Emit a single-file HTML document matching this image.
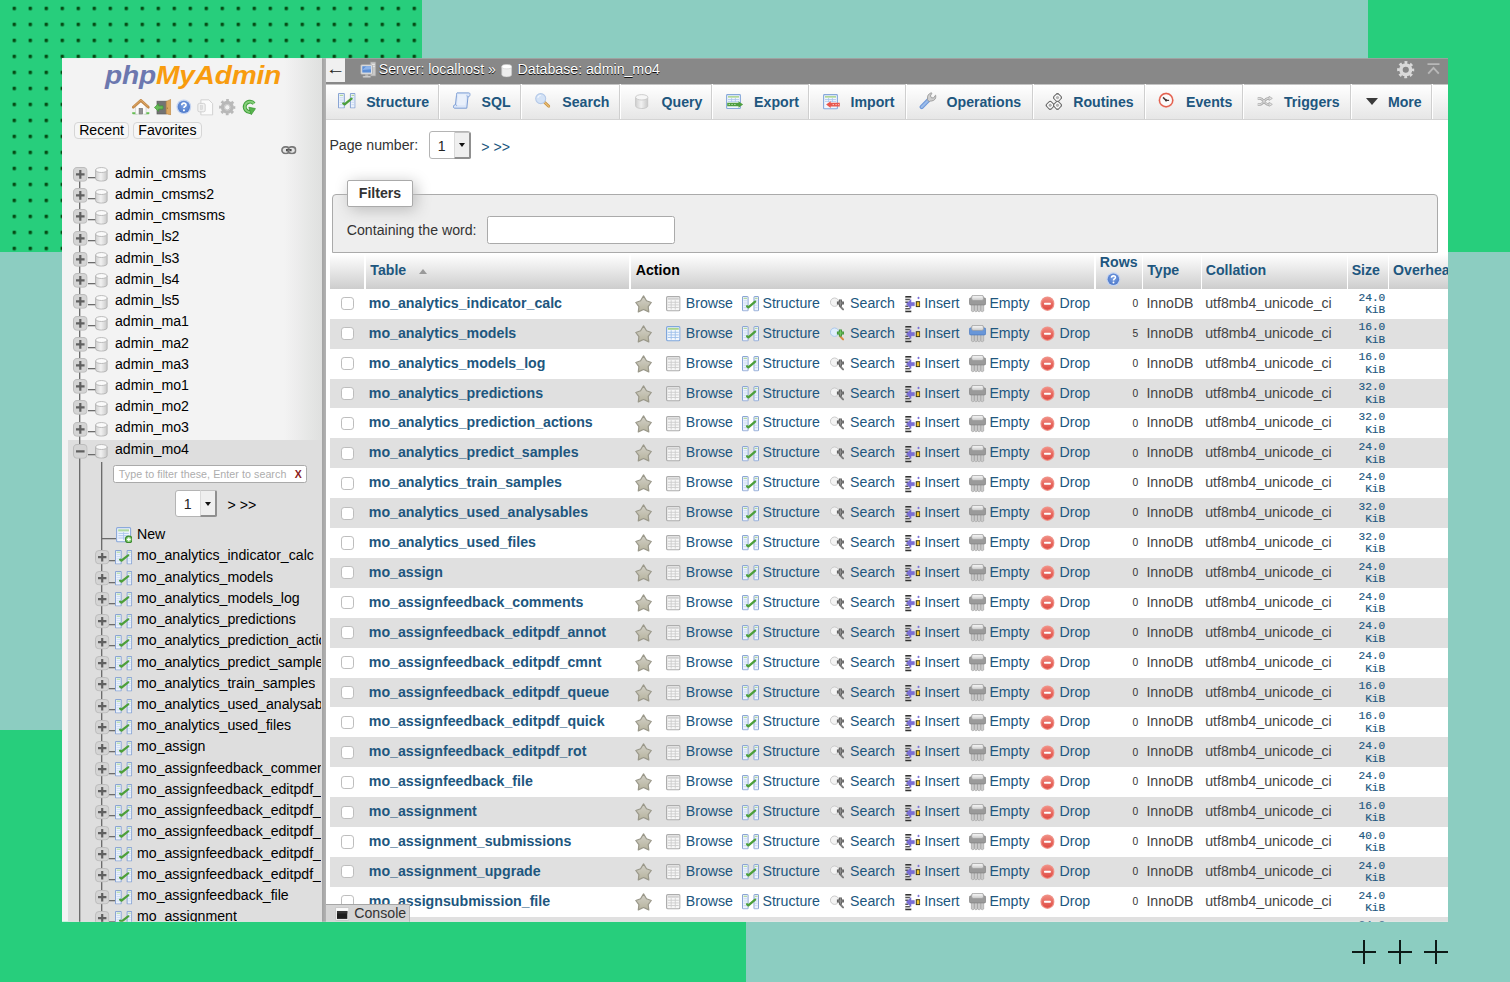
<!DOCTYPE html>
<html lang="en"><head><meta charset="utf-8"><title>phpMyAdmin</title>
<style>
html,body{margin:0;padding:0}
body{width:1510px;height:982px;background:#8ccdc1;position:relative;overflow:hidden;font-family:"Liberation Sans",Arial,sans-serif;font-size:14.15px;color:#444}
.grn{position:absolute;background:#27ce7c}
.plus{position:absolute;width:24px;height:24px}
.plus i{position:absolute;left:0;top:11px;width:24px;height:2px;background:#0d1a17}
.plus b{position:absolute;left:11px;top:0;width:2px;height:24px;background:#0d1a17}
#win{position:absolute;left:0;top:0;width:1510px;height:982px;clip-path:inset(58.25px 62px 60.25px 62px);background:#fff}
#win>*{position:absolute;white-space:nowrap}
.ic{position:absolute;overflow:visible}
#nav{left:62px;top:58px;width:260px;height:863px;background:linear-gradient(to right,#f3f3f3 0,#f3f3f3 222px,#ececec 236px,#e5e6e5 248px,#dfe0df 260px)}
#navhl{left:68px;top:440px;width:254px;height:482px;background:#dedede}
#resizer{left:322.1px;top:58px;width:3.8px;height:864px;background:linear-gradient(to right,#a2a2a2,#b2b2b2)}
#logo{left:105.2px;top:60.8px;font-size:25.6px;line-height:28px;font-weight:bold;font-style:italic;letter-spacing:-0.2px;transform-origin:0 0;transform:scaleX(1.10)}
#logo .php{color:#6c78af}#logo .mya{color:#f89c0e}
.nbtn{top:122.6px;height:15.4px;line-height:15.4px;border:1px solid #d6d6d6;border-radius:4px;background:#f6f6f6;color:#000;text-align:center;box-sizing:content-box;margin-left:0;width:0}
.nbtn{box-sizing:border-box;top:122.4px;height:16.8px;line-height:14.1px}
.vl{width:1px;background:#6c6c6c;box-shadow:1px 0 0 rgba(108,108,108,.35)}
.hl{height:1px;background:#6c6c6c;box-shadow:0 1px 0 rgba(108,108,108,.3)}
.pm{width:14.5px;height:14.5px;border-radius:4px;background:#d6d6d6;box-shadow:inset 0 0 0 1px #c2c2c2}
.pm i{position:absolute;left:3.1px;top:6.25px;width:8.5px;height:1.9px;background:#6a6a6a}
.pm b{position:absolute;left:6.25px;top:3.1px;width:1.9px;height:8.5px;background:#6a6a6a}
.nt{color:#000;line-height:20px;height:20px}
.nt.clip{max-width:184px;overflow:hidden}
.ninp{background:#fff;border:1px solid #aaa;border-radius:2.5px;box-sizing:border-box}
.ninp .ph{position:absolute;left:4.6px;top:0;line-height:16.6px;font-size:10.7px;color:#adadad;letter-spacing:0.05px}
.ninp .x{position:absolute;right:4.8px;top:0;line-height:17px;font-size:10.5px;font-weight:bold;color:#8b1a1a}
.sel{background:#fff;border:1px solid #b4b4b4;border-radius:3px;box-sizing:border-box}
.sel span{position:absolute;left:7.4px;top:1.5px;line-height:25px;font-size:14.1px;color:#222}
.sel em{position:absolute;right:-1px;top:-0.6px;bottom:-1px;width:16.6px;background:#efefef;border:solid;border-width:1.2px 2px 2px 0.6px;border-color:#c2c2c2 #909090 #8f8f8f #dadada;box-sizing:border-box;border-radius:0 2px 2px 0}
.sel em i{position:absolute;left:4px;top:10.6px;border:3.6px solid transparent;border-top:4.2px solid #111;border-bottom:0}
#crumb{left:326px;top:58px;width:1125px;height:25.6px;background:#888}
#back{left:326.4px;top:58px;width:18.8px;height:23.8px;background:#f0f0f0;color:#222;font-size:17px;line-height:21px;text-align:center;letter-spacing:0}
#back span{display:inline-block;transform:scale(1.15,0.95)}
.ct{top:58.7px;line-height:20px;color:#fff;text-shadow:0 1px 0 #111,0 0 1px #555}
#tabs{left:326px;top:83.6px;width:1125px;height:36.4px;border-top:1px solid #c4c4c4;background:linear-gradient(#fff,#e6e6e6);border-bottom:1px solid #d4d4d4;box-sizing:border-box}
.tab{top:84.4px;height:34.8px;border-right:1px solid #cfcfcf;box-shadow:1px 0 0 #fff}
.tt{top:91.8px;line-height:20px;font-weight:bold;color:#20567e}
.tri{width:0;height:0;border:6.15px solid transparent;border-top:7px solid #3a3a3a;border-bottom:0}
.mt{line-height:20px;color:#333}
.lk{color:#20567e}
#fs{left:331.9px;top:193.7px;width:1106px;height:59.2px;box-sizing:border-box;border:1px solid #aaa;border-radius:4px 4px 0 0;background:#eee}
#lg{left:347.3px;top:180.4px;width:65.4px;height:27px;box-sizing:border-box;border:1px solid #aaa;border-radius:2px;background:#fff;box-shadow:3px 3px 15px #bbb;font-weight:bold;color:#333;line-height:25px;text-align:center}
#finp{left:487.4px;top:216.1px;width:188.1px;height:27.6px;box-sizing:border-box;border:1px solid #aaa;border-radius:2.5px;background:#fff}
.th{top:254px;height:34.8px;background:linear-gradient(#fff,#cdcdcd)}
.tht{top:260.4px;line-height:20px;font-weight:bold}
.sortup{left:418.5px;top:269.4px;width:0;height:0;border:4px solid transparent;border-bottom:5px solid #999;border-top:0}
.rowbg{left:329.5px;width:1125px;height:29.9px;background:#e0e0e0}
.cb{left:340.8px;width:13.2px;height:13.2px;box-sizing:border-box;border:1px solid #bdbdbd;border-radius:3.2px;background:#fff}
.r{line-height:20px}
.b{font-weight:bold;font-size:14.2px}
.mono{font-family:"Liberation Mono",monospace;font-size:11.2px;line-height:12.6px;text-align:right}
#console{left:326px;top:904.3px;width:84.4px;height:18px;box-sizing:border-box;background:#d5d5d5;border-top:1px solid #a6a6a6;border-right:1px solid #b8b8b8}
#contxt{left:354.3px;top:902.6px;line-height:20px;color:#333}

.rn{font-size:11.2px;line-height:14px;color:#333;transform:scaleX(0.92);transform-origin:100% 50%}
.sz{-webkit-text-stroke:0.15px #235a81}

</style></head>
<body>
<svg width="0" height="0" style="position:absolute"><defs>
<linearGradient id="gdb" x1="0" x2="1"><stop offset="0" stop-color="#d0d0d0"/><stop offset="0.45" stop-color="#f1f1f1"/><stop offset="1" stop-color="#c8c8c8"/></linearGradient>
<linearGradient id="gstar" x1="0" x2="0" y1="0" y2="1"><stop offset="0" stop-color="#d3d1c9"/><stop offset="1" stop-color="#b6b39d"/></linearGradient>
<linearGradient id="gred" x1="0" x2="0" y1="0" y2="1"><stop offset="0" stop-color="#f08a80"/><stop offset="1" stop-color="#df4a42"/></linearGradient>
<radialGradient id="ghelp" cx="0.5" cy="0.4" r="0.6"><stop offset="0" stop-color="#7da2e4"/><stop offset="1" stop-color="#4c78c9"/></radialGradient>
<symbol id="i_db" viewBox="0 0 13 16" preserveAspectRatio="none"><path d="M0.600 3.300v9.400c0 1.500 2.600 2.700 5.900 2.700s5.900-1.200 5.900-2.700V3.300z" fill="url(#gdb)" stroke="#acacac" stroke-width="0.900"/><ellipse cx="6.500" cy="3.300" rx="5.900" ry="2.700" fill="#fafafa" stroke="#b2b2b2" stroke-width="0.900"/></symbol>
<symbol id="i_dbw" viewBox="0 0 13 16"><path d="M0.6 3.2v9.6c0 1.4 2.6 2.6 5.9 2.6s5.9-1.2 5.9-2.6V3.2z" fill="#ededed" stroke="#c8c8c8" stroke-width="0.8"/><ellipse cx="6.5" cy="3.2" rx="5.9" ry="2.6" fill="#fff" stroke="#d0d0d0" stroke-width="0.8"/></symbol>
<symbol id="i_dbq" viewBox="0 0 13.5 15.1" preserveAspectRatio="none"><path d="M0.600 3.300v8.500c0 1.500 2.700 2.700 6.150 2.700s6.150-1.200 6.150-2.700V3.300z" fill="url(#gdb)" stroke="#c6c6c6" stroke-width="0.9"/><ellipse cx="6.750" cy="3.300" rx="6.150" ry="2.700" fill="#f6f6f6" stroke="#c9c9c9" stroke-width="0.9"/></symbol>
<symbol id="i_struct" viewBox="0 0 17 15.4" preserveAspectRatio="none"><rect x="0.5" y="0.5" width="5.600" height="14.400" rx="0.500" fill="#edf3fc" stroke="#8aa5d4" stroke-width="1"/><rect x="12" y="0.5" width="4.500" height="14.400" rx="0.500" fill="#edf3fc" stroke="#8aa5d4" stroke-width="1"/><path d="M1.600 2.300h3.400M13 2.300h2.600" stroke="#9fd07f" stroke-width="0.9"/><path d="M1.600 4.700h3.400M1.600 7h3.400M1.600 9.300h3.400M1.600 11.600h3.400M13 4.700h2.600M13 7h2.600M13 9.300h2.600M13 11.600h2.600" stroke="#c3d6f1" stroke-width="0.8"/><path d="M5.100 10.300l1.300 1L13.100 5.600" fill="none" stroke="#4c9f3a" stroke-width="2.300" stroke-linejoin="round" stroke-linecap="round"/></symbol>
<symbol id="i_star" viewBox="0 0 17.1 18.2" preserveAspectRatio="none"><path d="M8.55 0.9L11.5 5.7L16.3 7.5L13.2 11.7L13.8 16.9L8.55 14.5L3.3 16.9L3.9 11.700L0.8 7.5L5.6 5.700Z" fill="url(#gstar)" stroke="#9a988a" stroke-width="1.200" stroke-linejoin="round"/></symbol>
<symbol id="i_browse" viewBox="0 0 14.6 15.4" preserveAspectRatio="none"><rect x="0.6" y="0.6" width="13.4" height="14.2" rx="1.2" fill="#f7f7f7" stroke="#adadad" stroke-width="1.200"/><rect x="1.800" y="1.900" width="11" height="1.900" fill="#d2d2d2"/><path d="M1.800 6.300h11M1.800 8.900h11M1.800 11.500h11M5.200 4.200v9.400M9.300 4.200v9.400" stroke="#cdcdcd" stroke-width="0.9"/></symbol>
<symbol id="i_browse_c" viewBox="0 0 14.6 15.4" preserveAspectRatio="none"><rect x="0.6" y="0.6" width="13.400" height="14.200" rx="1.200" fill="#f3f8fe" stroke="#7fa6dc" stroke-width="1.200"/><rect x="1.800" y="1.900" width="11" height="1.900" fill="#a9d48c"/><path d="M1.800 6.300h11M1.800 8.900h11M1.800 11.500h11M5.200 4.200v9.400M9.300 4.200v9.400" stroke="#9dbfea" stroke-width="0.9"/></symbol>
<symbol id="i_drop" viewBox="0 0 14.9 15.4" preserveAspectRatio="none"><ellipse cx="7.450" cy="7.700" rx="7" ry="7.200" fill="#ef9288"/><ellipse cx="7.450" cy="7.700" rx="5.900" ry="6.100" fill="url(#gred)"/><rect x="4" y="6.800" width="6.900" height="1.900" rx="0.700" fill="#fff"/></symbol>
<symbol id="i_help" viewBox="0 0 16 16"><circle cx="8" cy="8" r="7.600" fill="#c3d3f1"/><circle cx="8" cy="8" r="6.300" fill="url(#ghelp)"/><path d="M5.900 6.300c0-2.700 4.300-2.700 4.300-0.300c0 1.600-2.100 1.600-2.100 3.200" fill="none" stroke="#fff" stroke-width="1.700"/><circle cx="8.100" cy="11.600" r="1.050" fill="#fff"/></symbol>
<symbol id="i_home" viewBox="0 0 17.7 15.6" preserveAspectRatio="none"><path d="M0.400 13.200h5v2.200h-4c-1 0-1.300-0.600-1-2.200zM17.300 13.200h-5v2.200h4c1 0 1.300-0.600 1-2.200z" fill="#5cb34a"/><path d="M0.400 13.800h4.400M12.900 13.800h4.400" stroke="#8ad57a" stroke-width="0.800"/><path d="M3.600 7.400v7.800h10.500V7.400L8.850 2.800z" fill="#fcfcfc" stroke="#c4c4c4" stroke-width="0.600"/><rect x="7.100" y="9.400" width="3.500" height="5.800" fill="#909090" stroke="#6c6c6c" stroke-width="0.600"/><path d="M1.200 8.200L8.850 1.400l7.650 6.800" fill="none" stroke="#c48a4a" stroke-width="2.700" stroke-linejoin="miter" stroke-linecap="round"/><path d="M1.600 7.600L8.850 1.100l7.250 6.500" fill="none" stroke="#e3ad6b" stroke-width="0.900"/></symbol>
<symbol id="i_logout" viewBox="0 0 17.100 16.200" preserveAspectRatio="none"><rect x="3" y="2.200" width="9.600" height="12.800" fill="#737373" stroke="#5c5c5c" stroke-width="0.700"/><path d="M12.200 2.400L16.800 0.400v15.600l-4.600-1.300z" fill="#dba760" stroke="#b98444" stroke-width="0.600" stroke-linejoin="round"/><path d="M13.400 8.600v1.300" stroke="#9a6c33" stroke-width="0.800"/><path d="M0.400 8.500l4.200-3.800v2.200h4.400v3.200H4.600v2.200z" fill="#67bb58" stroke="#3f9836" stroke-width="0.700" stroke-linejoin="round"/></symbol>
<symbol id="i_docs" viewBox="0 0 16 16"><path d="M3.600 0.800h7.600l3.600 3.600v10.800H3.600z" fill="#fbfbfb" stroke="#cfcfcf" stroke-width="0.900"/><rect x="0.700" y="4.200" width="7" height="8" rx="1.500" fill="#f1f1f1" stroke="#cfcfcf" stroke-width="0.900"/><rect x="3" y="6.300" width="2.200" height="3.800" fill="#e0e0e0" stroke="#d2d2d2" stroke-width="0.500"/></symbol>
<symbol id="i_gear" viewBox="0 0 16 16"><circle cx="8" cy="8" r="4.600" fill="none" stroke="#b8b8b8" stroke-width="3.200"/><circle cx="8" cy="8" r="6.700" fill="none" stroke="#b8b8b8" stroke-width="2.400" stroke-dasharray="2.630 2.630" stroke-dashoffset="1.300"/><circle cx="8" cy="8" r="2.600" fill="#f3f3f3" stroke="#a6a6a6" stroke-width="0.600"/></symbol>
<symbol id="i_gearw" viewBox="0 0 16 16"><circle cx="8" cy="8" r="4.400" fill="none" stroke="#d9d9d9" stroke-width="3.200"/><circle cx="8" cy="8" r="6.600" fill="none" stroke="#d9d9d9" stroke-width="2.600" stroke-dasharray="2.590 2.590" stroke-dashoffset="1.300"/><circle cx="8" cy="8" r="2.300" fill="#888"/></symbol>
<symbol id="i_reload" viewBox="0 0 13.800 16" preserveAspectRatio="none"><path d="M12 4.600A5.200 5.200 0 1 0 8.600 13" fill="none" stroke="#3f9e3a" stroke-width="3.900"/><path d="M12 4.600A5.200 5.200 0 1 0 8.600 13" fill="none" stroke="#86cf7a" stroke-width="1.900"/><path d="M6.800 8.200l6.800 1.400l-4.400 6.200z" fill="#57b44c" stroke="#3a9634" stroke-width="0.700" stroke-linejoin="round"/></symbol>
<symbol id="i_link" viewBox="0 0 15.600 8.400" preserveAspectRatio="none"><rect x="0.900" y="0.900" width="7.600" height="6.600" rx="3.300" fill="#e4e4e4" stroke="#787878" stroke-width="1.600"/><rect x="7.100" y="0.900" width="7.600" height="6.600" rx="3.300" fill="#e4e4e4" stroke="#787878" stroke-width="1.600"/><path d="M5 4.200h5.600" stroke="#4a4a4a" stroke-width="2.200"/><path d="M6.600 4.200h2.400" stroke="#999" stroke-width="1"/></symbol>
<symbol id="i_new" viewBox="0 0 16 16"><rect x="0.600" y="0.600" width="14" height="14.200" rx="1" fill="#eff5fd" stroke="#8aa9da" stroke-width="1.100"/><rect x="2.200" y="2.300" width="10.800" height="2.100" fill="#aed9a0"/><path d="M2.400 6.400h10.400M2.400 8.700h10.400M2.400 11h10.400M7.600 5.200v7.600" stroke="#a9c4ec" stroke-width="0.900"/><circle cx="12.800" cy="12.400" r="3.300" fill="#86cf77" stroke="#3c8a2e" stroke-width="1.300"/><path d="M10.900 12.400h3.800M12.800 10.500v3.800" stroke="#fff" stroke-width="1.200"/></symbol>
<symbol id="i_server" viewBox="0 0 16 18"><rect x="10" y="1" width="5.600" height="14" fill="#c9c9c9" stroke="#9a9a9a" stroke-width="0.700"/><path d="M11 3.500h3.600M11 5.500h3.600" stroke="#eee" stroke-width="0.800"/><rect x="0.600" y="3.800" width="11.600" height="9.400" rx="0.800" fill="#e8e8e8" stroke="#aaa" stroke-width="0.800"/><rect x="2" y="5.200" width="8.800" height="6.400" fill="#5d8fd6"/><path d="M2 9l4-3.800h4.800v3z" fill="#8db4ea"/><rect x="5" y="13.200" width="3" height="2" fill="#bbb"/><rect x="2.600" y="15" width="7.800" height="1.600" rx="0.600" fill="#d4d4d4" stroke="#aaa" stroke-width="0.400"/></symbol>
<symbol id="i_coll" viewBox="0 0 13 12"><path d="M0.500 1.200h12" stroke="#b8b8b8" stroke-width="1.800"/><path d="M1.200 10.600L6.500 4.800l5.300 5.800" fill="none" stroke="#b8b8b8" stroke-width="1.900"/></symbol>
<symbol id="i_sql" viewBox="0 0 17.7 17.5" preserveAspectRatio="none"><path d="M4 0.900h11.800c1.200 0 1.600 1.100 1.200 2.400c-0.300 1-1 1.500-2 1.500l-1.200 11.400H1.800c-1.300 0-1.700-1-1.200-2.200c0.300-0.900 1-1.400 1.900-1.400L3.500 3.200c0.100-1-0.300-1.700 0.500-2.300z" fill="#dbe6f8" stroke="#7b9dd4" stroke-width="1" stroke-linejoin="round"/><path d="M15 4.800c-0.900 0-1.300-0.700-1.100-1.500M2.500 12.600c0.900 0 1.300 0.700 1.100 1.500" fill="none" stroke="#7b9dd4" stroke-width="0.800"/><path d="M5 2.300h8.300l-1 11H4z" fill="#e9f0fb"/></symbol>
<symbol id="i_search" viewBox="0 0 15.2 14.8" preserveAspectRatio="none"><path d="M9.600 9.400l4.300 4" stroke="#c99345" stroke-width="2.800" stroke-linecap="round"/><path d="M9.600 9.400l4.300 4" stroke="#e9c078" stroke-width="1.200" stroke-linecap="round"/><circle cx="5.700" cy="5.600" r="5" fill="#d3e2f6" stroke="#b4c9e8" stroke-width="1.100"/><path d="M2.800 4.800a3 3 0 0 1 3-2.300" fill="none" stroke="#f1f6fd" stroke-width="1.200"/></symbol>
<symbol id="i_search_g" viewBox="0 0 14 13.7" preserveAspectRatio="none"><path d="M10.400 9.600l2.600 2.800" stroke="#808080" stroke-width="2.100" stroke-linecap="round"/><circle cx="4.600" cy="5.200" r="4.200" fill="#f3f3f3" stroke="#c6c6c6" stroke-width="0.900"/><path d="M10.400 2.500v7M6.900 6h7" stroke="#595959" stroke-width="3"/><path d="M10.400 3.300v5.400M7.700 6h5.400" stroke="#909090" stroke-width="1.200"/></symbol>
<symbol id="i_search_c" viewBox="0 0 14 13.7" preserveAspectRatio="none"><path d="M10.400 9.600l2.600 2.800" stroke="#d98a45" stroke-width="2.100" stroke-linecap="round"/><circle cx="4.600" cy="5.200" r="4.200" fill="#dfeefc" stroke="#a6c4ea" stroke-width="0.900"/><path d="M10.400 2.500v7M6.900 6h7" stroke="#3d8f32" stroke-width="3"/><path d="M10.400 3.300v5.400M7.700 6h5.400" stroke="#74c765" stroke-width="1.200"/></symbol>
<symbol id="i_insert" viewBox="0 0 15.2 16.4" preserveAspectRatio="none"><path d="M0.300 0.900h6M0.300 15.500h6" stroke="#333" stroke-width="1.800"/><path d="M0.300 3.600h4.600M0.300 6.200h3M0.300 10.200h3M0.300 12.800h4.600" stroke="#555" stroke-width="1.500"/><path d="M0.300 2.200h5.500M0.300 14.200h5.500" stroke="#c9c9c9" stroke-width="1"/><path d="M1.300 8.100l4.700-4.600v3h3.400v3.200H6v3z" fill="#7a6fd6" stroke="#6a5fc8" stroke-width="0.500"/><rect x="11.300" y="5.700" width="3.500" height="4.900" fill="#f0c431" stroke="#3a3418" stroke-width="1"/><path d="M13.500 0.500l1.300 1.400l-1.300 1.400l-1.300-1.400z" fill="#7a6fd6"/></symbol>
<symbol id="i_empty" viewBox="0 0 17.1 17.4" preserveAspectRatio="none"><path d="M2.400 9.500v6.500l1.500 1l1.400-1.200l1.600 1.200l1.600-1.100l1.700 1.100l1.600-1.200l1.400 1.200l1.500-1V9.500z" fill="#c9c9c9" stroke="#a5a5a5" stroke-width="0.700"/><path d="M5.300 10v5.600M8.500 10v5.800M11.800 10v5.600" stroke="#a0a0a0" stroke-width="0.800"/><rect x="0.400" y="2.900" width="16.300" height="7" rx="1.500" fill="#9a9a9a" stroke="#858585" stroke-width="0.800"/><rect x="2.600" y="0.400" width="11.900" height="4.900" rx="1.600" fill="#dcdcdc" stroke="#9f9f9f" stroke-width="0.800"/><rect x="3.600" y="1.300" width="9.900" height="1.300" rx="0.600" fill="#f4f4f4"/></symbol>
<symbol id="i_empty_c" viewBox="0 0 17.1 17.4" preserveAspectRatio="none"><path d="M2.400 9.500v6.500l1.500 1l1.400-1.200l1.600 1.200l1.600-1.100l1.700 1.100l1.600-1.200l1.400 1.200l1.500-1V9.500z" fill="#c9c9c9" stroke="#a5a5a5" stroke-width="0.700"/><path d="M5.300 10v5.600M8.500 10v5.800M11.800 10v5.600" stroke="#a0a0a0" stroke-width="0.800"/><rect x="0.400" y="2.900" width="16.300" height="7" rx="1.500" fill="#6896d8" stroke="#4f7dc2" stroke-width="0.800"/><rect x="2.600" y="0.400" width="11.900" height="4.900" rx="1.600" fill="#dcdcdc" stroke="#9f9f9f" stroke-width="0.800"/><rect x="3.600" y="1.300" width="9.900" height="1.300" rx="0.600" fill="#f4f4f4"/></symbol>
<symbol id="i_export" viewBox="0 0 17.5 15.1" preserveAspectRatio="none"><rect x="0.600" y="0.600" width="13.800" height="13.900" rx="0.900" fill="#f1f6fd" stroke="#86a8da" stroke-width="1.100"/><rect x="2" y="2.100" width="11" height="1.500" fill="#a9d48c"/><path d="M2 5.500h11M2 7.400h11M5.600 4v4M9.400 4v4" stroke="#a9c5ec" stroke-width="0.800"/><path d="M1.200 8.700h11.300V7.200l4.600 3.300l-4.600 3.300v-1.500H1.200z" fill="#4f9f40"/><path d="M2.600 10.500h1.400M5.400 10.500h1.400M8.200 10.500h1.400" stroke="#b9dfb0" stroke-width="1"/></symbol>
<symbol id="i_import" viewBox="0 0 17.100 15.500" preserveAspectRatio="none"><rect x="0.600" y="0.600" width="13.800" height="14.300" rx="0.900" fill="#f1f6fd" stroke="#86a8da" stroke-width="1.100"/><rect x="2" y="2.100" width="11" height="1.500" fill="#a9d48c"/><path d="M2 5.500h11M2 7.400h11M5.600 4v4M9.400 4v4" stroke="#a9c5ec" stroke-width="0.800"/><path d="M16.800 8.800H7.700V7.300L3.100 10.600l4.600 3.300v-1.500h9.100z" fill="#e9574d"/><path d="M9.600 10.600h1.400M12.400 10.600h1.400M15 10.600h1" stroke="#fbc9c4" stroke-width="1"/></symbol>
<symbol id="i_wrench" viewBox="0 0 17.6 17.7" preserveAspectRatio="none"><path d="M2.700 15l6.600-6.700" stroke="#6f98d8" stroke-width="4.200" stroke-linecap="round"/><path d="M2.700 15l6.600-6.700" stroke="#9bbcea" stroke-width="2" stroke-linecap="round"/><path d="M8.600 6.500c-0.500-2.400 0.800-4.700 3.400-5.600c0.600-0.200 1 0.100 0.700 0.600l-1.300 2.400l1.100 1.900l2.200 0.100l1.500-2.300c0.300-0.500 0.800-0.400 0.800 0.200c0.200 2.700-1.700 4.900-4.300 5.200c-1 0.100-1.700 0-2.400 0.600l-2.300-2.200c0.500-0.400 0.700-0.600 0.600-0.900z" fill="#cfcfcf" stroke="#8f8f8f" stroke-width="0.800" stroke-linejoin="round"/></symbol>
<symbol id="i_routines" viewBox="0 0 17.9 17.1" preserveAspectRatio="none"><g transform="translate(12.5 4.600)"><rect x="-3.300" y="-3.300" width="6.600" height="6.600" rx="2" transform="rotate(45)" fill="#fafafa" stroke="#6d6d6d" stroke-width="1"/><path d="M0 -4.400v1M0 4.400v-1M-4.400 0h1M4.400 0h-1" stroke="#6d6d6d" stroke-width="1.800"/><circle r="1.200" fill="#b9b9b9" stroke="#8a8a8a" stroke-width="0.500"/></g><g transform="translate(5.200 12.300)"><rect x="-3.300" y="-3.300" width="6.600" height="6.600" rx="2" transform="rotate(45)" fill="#fafafa" stroke="#6d6d6d" stroke-width="1"/><path d="M0 -4.400v1M0 4.400v-1M-4.400 0h1M4.400 0h-1" stroke="#6d6d6d" stroke-width="1.800"/><circle r="1.200" fill="#b9b9b9" stroke="#8a8a8a" stroke-width="0.500"/></g><g transform="translate(12.500 12.300)"><rect x="-3.300" y="-3.300" width="6.600" height="6.600" rx="2" transform="rotate(45)" fill="#fafafa" stroke="#6d6d6d" stroke-width="1"/><path d="M0 -4.400v1M0 4.400v-1M-4.400 0h1M4.400 0h-1" stroke="#6d6d6d" stroke-width="1.800"/><circle r="1.200" fill="#b9b9b9" stroke="#8a8a8a" stroke-width="0.500"/></g></symbol>
<symbol id="i_clock" viewBox="0 0 16.2 16.3" preserveAspectRatio="none"><circle cx="8.100" cy="8.150" r="7.700" fill="#f6b9ae"/><circle cx="8.100" cy="8.150" r="6.600" fill="#fbfbfb" stroke="#e2604f" stroke-width="1.400"/><path d="M8.100 8.400L5 5.400" stroke="#4a3a3a" stroke-width="1.500"/><path d="M8.100 8.400h3" stroke="#4a3a3a" stroke-width="1.300"/><circle cx="8.100" cy="8.400" r="1.100" fill="#3c3030"/></symbol>
<symbol id="i_trig" viewBox="0 0 15.800 10.700" preserveAspectRatio="none"><path d="M0.700 2.400h2.500c3 0 4.600 6 7.600 6h2M0.700 8.400h2.500c3 0 4.600-6 7.600-6h2" fill="none" stroke="#a6a6a6" stroke-width="2.500"/><path d="M0.700 2.400h2.500c3 0 4.600 6 7.600 6h2M0.700 8.400h2.500c3 0 4.600-6 7.600-6h2" fill="none" stroke="#e9e9e9" stroke-width="0.900"/><path d="M12 0.300l3.400 2.100l-3.400 2.100zM12 6.300l3.400 2.100l-3.400 2.100z" fill="#e4e4e4" stroke="#a6a6a6" stroke-width="0.700" stroke-linejoin="round"/></symbol>
<symbol id="i_console" viewBox="0 0 14.300 13.900" preserveAspectRatio="none"><rect x="0.400" y="0.400" width="13.500" height="13.100" rx="1" fill="#ececec" stroke="#c2c2c2" stroke-width="0.800"/><rect x="1.200" y="1.200" width="11.900" height="2.600" fill="#fafafa"/><rect x="2" y="4" width="10.300" height="7.900" fill="#1d1d1d"/><path d="M2 4h10.300v2.400H2z" fill="#333"/></symbol>
<symbol id="i_plus" viewBox="0 0 14.500 14.500"><rect x="0.500" y="0.500" width="13.500" height="13.500" rx="3.600" fill="#d4d4d4" stroke="#bcbcbc" stroke-width="1"/><path d="M3 7.250h8.500M7.250 3v8.500" stroke="#606060" stroke-width="2.200"/></symbol>
<symbol id="i_minus" viewBox="0 0 14.500 14.500"><rect x="0.500" y="0.500" width="13.500" height="13.500" rx="3.600" fill="#d4d4d4" stroke="#bcbcbc" stroke-width="1"/><path d="M3 7.250h8.500" stroke="#606060" stroke-width="2.200"/></symbol>
</defs></svg>
<div class="grn" style="left:0;top:0;width:421.5px;height:251.5px"><svg width="422" height="252" style="position:absolute;left:0;top:0"><defs><pattern id="dots" x="12.6" y="6.7" width="16" height="16" patternUnits="userSpaceOnUse"><rect x="0" y="0" width="3.4" height="3.4" rx="0.9" fill="#054a14"/></pattern></defs><rect x="6" width="416" height="252" fill="url(#dots)"/></svg></div>
<div class="grn" style="left:1368px;top:0;width:142px;height:251.7px"></div>
<div class="grn" style="left:0;top:729.7px;width:745.7px;height:253px"></div>
<div class="plus" style="left:1351.9px;top:940.3px"><i></i><b></b></div><div class="plus" style="left:1388px;top:940.3px"><i></i><b></b></div><div class="plus" style="left:1423.8px;top:940.3px"><i></i><b></b></div>
<div id="win">
<div id="nav"></div><div id="navhl"></div><div id="resizer"></div>
<div id="logo"><span class="php">php</span><span class="mya">MyAdmin</span></div>
<svg class="ic" style="left:132px;top:99.3px;width:17.7px;height:15.6px" ><use href="#i_home"/></svg><svg class="ic" style="left:153.9px;top:99px;width:17.1px;height:16.2px" ><use href="#i_logout"/></svg><svg class="ic" style="left:176.2px;top:99.3px;width:15.7px;height:15.7px" ><use href="#i_help"/></svg><svg class="ic" style="left:197.2px;top:98.5px;width:17px;height:16.8px" ><use href="#i_docs"/></svg><svg class="ic" style="left:219.2px;top:99px;width:16.6px;height:16.6px" ><use href="#i_gear"/></svg><svg class="ic" style="left:242px;top:99.3px;width:13.8px;height:16px" ><use href="#i_reload"/></svg><div class="nbtn" style="left:74.3px;width:54.5px">Recent</div><div class="nbtn" style="left:133.3px;width:68.3px">Favorites</div>
<svg class="ic" style="left:281.1px;top:145.8px;width:15.6px;height:8.4px" ><use href="#i_link"/></svg><div class="vl" style="left:79px;top:180px;height:745px"></div><div class="vl" style="left:101.3px;top:461.7px;height:465px"></div><div class="hl" style="left:87.5px;top:176.70px;width:8.5px"></div><svg class="ic" style="left:73.1px;top:166.95px;width:14.6px;height:14.8px" ><use href="#i_plus"/></svg><svg class="ic" style="left:95.4px;top:167.3px;width:12.8px;height:14.7px" ><use href="#i_db"/></svg><div class="nt" style="left:115px;top:162.72px">admin_cmsms</div>
<div class="hl" style="left:87.5px;top:197.93px;width:8.5px"></div><svg class="ic" style="left:73.1px;top:188.18px;width:14.6px;height:14.8px" ><use href="#i_plus"/></svg><svg class="ic" style="left:95.4px;top:188.53px;width:12.8px;height:14.7px" ><use href="#i_db"/></svg><div class="nt" style="left:115px;top:183.95px">admin_cmsms2</div>
<div class="hl" style="left:87.5px;top:219.16px;width:8.5px"></div><svg class="ic" style="left:73.1px;top:209.41px;width:14.6px;height:14.8px" ><use href="#i_plus"/></svg><svg class="ic" style="left:95.4px;top:209.76px;width:12.8px;height:14.7px" ><use href="#i_db"/></svg><div class="nt" style="left:115px;top:205.18px">admin_cmsmsms</div>
<div class="hl" style="left:87.5px;top:240.39px;width:8.5px"></div><svg class="ic" style="left:73.1px;top:230.64px;width:14.6px;height:14.8px" ><use href="#i_plus"/></svg><svg class="ic" style="left:95.4px;top:230.99px;width:12.8px;height:14.7px" ><use href="#i_db"/></svg><div class="nt" style="left:115px;top:226.41px">admin_ls2</div>
<div class="hl" style="left:87.5px;top:261.62px;width:8.5px"></div><svg class="ic" style="left:73.1px;top:251.87px;width:14.6px;height:14.8px" ><use href="#i_plus"/></svg><svg class="ic" style="left:95.4px;top:252.22px;width:12.8px;height:14.7px" ><use href="#i_db"/></svg><div class="nt" style="left:115px;top:247.64px">admin_ls3</div>
<div class="hl" style="left:87.5px;top:282.85px;width:8.5px"></div><svg class="ic" style="left:73.1px;top:273.1px;width:14.6px;height:14.8px" ><use href="#i_plus"/></svg><svg class="ic" style="left:95.4px;top:273.45px;width:12.8px;height:14.7px" ><use href="#i_db"/></svg><div class="nt" style="left:115px;top:268.87px">admin_ls4</div>
<div class="hl" style="left:87.5px;top:304.08px;width:8.5px"></div><svg class="ic" style="left:73.1px;top:294.33px;width:14.6px;height:14.8px" ><use href="#i_plus"/></svg><svg class="ic" style="left:95.4px;top:294.68px;width:12.8px;height:14.7px" ><use href="#i_db"/></svg><div class="nt" style="left:115px;top:290.10px">admin_ls5</div>
<div class="hl" style="left:87.5px;top:325.31px;width:8.5px"></div><svg class="ic" style="left:73.1px;top:315.56px;width:14.6px;height:14.8px" ><use href="#i_plus"/></svg><svg class="ic" style="left:95.4px;top:315.91px;width:12.8px;height:14.7px" ><use href="#i_db"/></svg><div class="nt" style="left:115px;top:311.33px">admin_ma1</div>
<div class="hl" style="left:87.5px;top:346.54px;width:8.5px"></div><svg class="ic" style="left:73.1px;top:336.79px;width:14.6px;height:14.8px" ><use href="#i_plus"/></svg><svg class="ic" style="left:95.4px;top:337.14px;width:12.8px;height:14.7px" ><use href="#i_db"/></svg><div class="nt" style="left:115px;top:332.56px">admin_ma2</div>
<div class="hl" style="left:87.5px;top:367.77px;width:8.5px"></div><svg class="ic" style="left:73.1px;top:358.02px;width:14.6px;height:14.8px" ><use href="#i_plus"/></svg><svg class="ic" style="left:95.4px;top:358.37px;width:12.8px;height:14.7px" ><use href="#i_db"/></svg><div class="nt" style="left:115px;top:353.79px">admin_ma3</div>
<div class="hl" style="left:87.5px;top:389.00px;width:8.5px"></div><svg class="ic" style="left:73.1px;top:379.25px;width:14.6px;height:14.8px" ><use href="#i_plus"/></svg><svg class="ic" style="left:95.4px;top:379.6px;width:12.8px;height:14.7px" ><use href="#i_db"/></svg><div class="nt" style="left:115px;top:375.02px">admin_mo1</div>
<div class="hl" style="left:87.5px;top:410.23px;width:8.5px"></div><svg class="ic" style="left:73.1px;top:400.48px;width:14.6px;height:14.8px" ><use href="#i_plus"/></svg><svg class="ic" style="left:95.4px;top:400.83px;width:12.8px;height:14.7px" ><use href="#i_db"/></svg><div class="nt" style="left:115px;top:396.25px">admin_mo2</div>
<div class="hl" style="left:87.5px;top:431.46px;width:8.5px"></div><svg class="ic" style="left:73.1px;top:421.71px;width:14.6px;height:14.8px" ><use href="#i_plus"/></svg><svg class="ic" style="left:95.4px;top:422.06px;width:12.8px;height:14.7px" ><use href="#i_db"/></svg><div class="nt" style="left:115px;top:417.48px">admin_mo3</div>
<div class="hl" style="left:87.5px;top:453.59px;width:8.5px"></div><svg class="ic" style="left:73.1px;top:443.84px;width:14.6px;height:14.8px" ><use href="#i_minus"/></svg><svg class="ic" style="left:95.4px;top:444.19px;width:12.8px;height:14.7px" ><use href="#i_db"/></svg><div class="nt" style="left:115px;top:438.71px">admin_mo4</div>
<div class="ninp" style="left:113.2px;top:464.6px;width:194.3px;height:18.6px"><span class="ph">Type to filter these, Enter to search</span><span class="x">X</span></div>
<div class="sel" style="left:175.4px;top:489.8px;width:41.4px;height:27.4px"><span>1</span><em><i></i></em></div><div class="nt" style="left:227.5px;top:494.6px">&gt; &gt;&gt;</div>
<div class="hl" style="left:101.5px;top:538.2px;width:14.5px"></div><svg class="ic" style="left:116px;top:527.2px;width:16px;height:16px" ><use href="#i_new"/></svg><div class="nt" style="left:137px;top:523.9px">New</div>
<div class="hl" style="left:109px;top:560.40px;width:6.5px"></div><svg class="ic" style="left:95.1px;top:550.0px;width:14.4px;height:14.4px" ><use href="#i_plus"/></svg><svg class="ic" style="left:114.8px;top:550.0px;width:17.2px;height:14.5px" ><use href="#i_struct"/></svg><div class="nt clip" style="left:137px;top:545.42px">mo_analytics_indicator_calc</div>
<div class="hl" style="left:109px;top:581.63px;width:6.5px"></div><svg class="ic" style="left:95.1px;top:571.23px;width:14.4px;height:14.4px" ><use href="#i_plus"/></svg><svg class="ic" style="left:114.8px;top:571.23px;width:17.2px;height:14.5px" ><use href="#i_struct"/></svg><div class="nt clip" style="left:137px;top:566.65px">mo_analytics_models</div>
<div class="hl" style="left:109px;top:602.86px;width:6.5px"></div><svg class="ic" style="left:95.1px;top:592.46px;width:14.4px;height:14.4px" ><use href="#i_plus"/></svg><svg class="ic" style="left:114.8px;top:592.46px;width:17.2px;height:14.5px" ><use href="#i_struct"/></svg><div class="nt clip" style="left:137px;top:587.88px">mo_analytics_models_log</div>
<div class="hl" style="left:109px;top:624.09px;width:6.5px"></div><svg class="ic" style="left:95.1px;top:613.69px;width:14.4px;height:14.4px" ><use href="#i_plus"/></svg><svg class="ic" style="left:114.8px;top:613.69px;width:17.2px;height:14.5px" ><use href="#i_struct"/></svg><div class="nt clip" style="left:137px;top:609.11px">mo_analytics_predictions</div>
<div class="hl" style="left:109px;top:645.32px;width:6.5px"></div><svg class="ic" style="left:95.1px;top:634.92px;width:14.4px;height:14.4px" ><use href="#i_plus"/></svg><svg class="ic" style="left:114.8px;top:634.92px;width:17.2px;height:14.5px" ><use href="#i_struct"/></svg><div class="nt clip" style="left:137px;top:630.34px">mo_analytics_prediction_actions</div>
<div class="hl" style="left:109px;top:666.55px;width:6.5px"></div><svg class="ic" style="left:95.1px;top:656.15px;width:14.4px;height:14.4px" ><use href="#i_plus"/></svg><svg class="ic" style="left:114.8px;top:656.15px;width:17.2px;height:14.5px" ><use href="#i_struct"/></svg><div class="nt clip" style="left:137px;top:651.57px">mo_analytics_predict_samples</div>
<div class="hl" style="left:109px;top:687.78px;width:6.5px"></div><svg class="ic" style="left:95.1px;top:677.38px;width:14.4px;height:14.4px" ><use href="#i_plus"/></svg><svg class="ic" style="left:114.8px;top:677.38px;width:17.2px;height:14.5px" ><use href="#i_struct"/></svg><div class="nt clip" style="left:137px;top:672.80px">mo_analytics_train_samples</div>
<div class="hl" style="left:109px;top:709.01px;width:6.5px"></div><svg class="ic" style="left:95.1px;top:698.61px;width:14.4px;height:14.4px" ><use href="#i_plus"/></svg><svg class="ic" style="left:114.8px;top:698.61px;width:17.2px;height:14.5px" ><use href="#i_struct"/></svg><div class="nt clip" style="left:137px;top:694.03px">mo_analytics_used_analysables</div>
<div class="hl" style="left:109px;top:730.24px;width:6.5px"></div><svg class="ic" style="left:95.1px;top:719.84px;width:14.4px;height:14.4px" ><use href="#i_plus"/></svg><svg class="ic" style="left:114.8px;top:719.84px;width:17.2px;height:14.5px" ><use href="#i_struct"/></svg><div class="nt clip" style="left:137px;top:715.26px">mo_analytics_used_files</div>
<div class="hl" style="left:109px;top:751.47px;width:6.5px"></div><svg class="ic" style="left:95.1px;top:741.07px;width:14.4px;height:14.4px" ><use href="#i_plus"/></svg><svg class="ic" style="left:114.8px;top:741.07px;width:17.2px;height:14.5px" ><use href="#i_struct"/></svg><div class="nt clip" style="left:137px;top:736.49px">mo_assign</div>
<div class="hl" style="left:109px;top:772.70px;width:6.5px"></div><svg class="ic" style="left:95.1px;top:762.3px;width:14.4px;height:14.4px" ><use href="#i_plus"/></svg><svg class="ic" style="left:114.8px;top:762.3px;width:17.2px;height:14.5px" ><use href="#i_struct"/></svg><div class="nt clip" style="left:137px;top:757.72px">mo_assignfeedback_comments</div>
<div class="hl" style="left:109px;top:793.93px;width:6.5px"></div><svg class="ic" style="left:95.1px;top:783.53px;width:14.4px;height:14.4px" ><use href="#i_plus"/></svg><svg class="ic" style="left:114.8px;top:783.53px;width:17.2px;height:14.5px" ><use href="#i_struct"/></svg><div class="nt clip" style="left:137px;top:778.95px">mo_assignfeedback_editpdf_annot</div>
<div class="hl" style="left:109px;top:815.16px;width:6.5px"></div><svg class="ic" style="left:95.1px;top:804.76px;width:14.4px;height:14.4px" ><use href="#i_plus"/></svg><svg class="ic" style="left:114.8px;top:804.76px;width:17.2px;height:14.5px" ><use href="#i_struct"/></svg><div class="nt clip" style="left:137px;top:800.18px">mo_assignfeedback_editpdf_cmnt</div>
<div class="hl" style="left:109px;top:836.39px;width:6.5px"></div><svg class="ic" style="left:95.1px;top:825.99px;width:14.4px;height:14.4px" ><use href="#i_plus"/></svg><svg class="ic" style="left:114.8px;top:825.99px;width:17.2px;height:14.5px" ><use href="#i_struct"/></svg><div class="nt clip" style="left:137px;top:821.41px">mo_assignfeedback_editpdf_queue</div>
<div class="hl" style="left:109px;top:857.62px;width:6.5px"></div><svg class="ic" style="left:95.1px;top:847.22px;width:14.4px;height:14.4px" ><use href="#i_plus"/></svg><svg class="ic" style="left:114.8px;top:847.22px;width:17.2px;height:14.5px" ><use href="#i_struct"/></svg><div class="nt clip" style="left:137px;top:842.64px">mo_assignfeedback_editpdf_quick</div>
<div class="hl" style="left:109px;top:878.85px;width:6.5px"></div><svg class="ic" style="left:95.1px;top:868.45px;width:14.4px;height:14.4px" ><use href="#i_plus"/></svg><svg class="ic" style="left:114.8px;top:868.45px;width:17.2px;height:14.5px" ><use href="#i_struct"/></svg><div class="nt clip" style="left:137px;top:863.87px">mo_assignfeedback_editpdf_rot</div>
<div class="hl" style="left:109px;top:900.08px;width:6.5px"></div><svg class="ic" style="left:95.1px;top:889.68px;width:14.4px;height:14.4px" ><use href="#i_plus"/></svg><svg class="ic" style="left:114.8px;top:889.68px;width:17.2px;height:14.5px" ><use href="#i_struct"/></svg><div class="nt clip" style="left:137px;top:885.10px">mo_assignfeedback_file</div>
<div class="hl" style="left:109px;top:921.31px;width:6.5px"></div><svg class="ic" style="left:95.1px;top:910.91px;width:14.4px;height:14.4px" ><use href="#i_plus"/></svg><svg class="ic" style="left:114.8px;top:910.91px;width:17.2px;height:14.5px" ><use href="#i_struct"/></svg><div class="nt clip" style="left:137px;top:906.33px">mo_assignment</div>
<div id="crumb"></div><div id="back"><span>&larr;</span></div>
<svg class="ic" style="left:359.5px;top:60.5px;width:16.5px;height:18px" ><use href="#i_server"/></svg><div class="ct" style="left:378.8px">Server: localhost »</div><svg class="ic" style="left:501.4px;top:63.9px;width:11.4px;height:13.4px" ><use href="#i_dbw"/></svg><div class="ct" style="left:517.6px">Database: admin_mo4</div>
<svg class="ic" style="left:1396.5px;top:61px;width:17.5px;height:17.5px" ><use href="#i_gearw"/></svg><svg class="ic" style="left:1427.3px;top:63px;width:13px;height:12px" ><use href="#i_coll"/></svg><div id="tabs"></div>
<div class="tab" style="left:326px;width:112.2px"></div><svg class="ic" style="left:337.7px;top:93.4px;width:17.6px;height:15.5px" ><use href="#i_struct"/></svg><div class="tt" style="left:366.2px">Structure</div>
<div class="tab" style="left:438.4px;width:81.4px"></div><svg class="ic" style="left:453.3px;top:92.3px;width:17.7px;height:17.5px" ><use href="#i_sql"/></svg><div class="tt" style="left:481.5px">SQL</div>
<div class="tab" style="left:520px;width:98.6px"></div><svg class="ic" style="left:535px;top:93.2px;width:15.2px;height:14.8px" ><use href="#i_search"/></svg><div class="tt" style="left:562.3px">Search</div>
<div class="tab" style="left:618.8px;width:92.7px"></div><svg class="ic" style="left:635.1px;top:93.5px;width:13.5px;height:15.1px" ><use href="#i_dbq"/></svg><div class="tt" style="left:661.5px">Query</div>
<div class="tab" style="left:711.7px;width:96.7px"></div><svg class="ic" style="left:726.1px;top:93.5px;width:17.5px;height:15.1px" ><use href="#i_export"/></svg><div class="tt" style="left:754.1px">Export</div>
<div class="tab" style="left:808.6px;width:96.0px"></div><svg class="ic" style="left:822.7px;top:93.5px;width:17.1px;height:15.5px" ><use href="#i_import"/></svg><div class="tt" style="left:850.6px">Import</div>
<div class="tab" style="left:904.8px;width:126.9px"></div><svg class="ic" style="left:918.6px;top:92.3px;width:17.6px;height:17.7px" ><use href="#i_wrench"/></svg><div class="tt" style="left:946.5px">Operations</div>
<div class="tab" style="left:1031.9px;width:111.7px"></div><svg class="ic" style="left:1045.1px;top:92.7px;width:17.9px;height:17.1px" ><use href="#i_routines"/></svg><div class="tt" style="left:1073.2px">Routines</div>
<div class="tab" style="left:1143.8px;width:98.0px"></div><svg class="ic" style="left:1157.9px;top:92.3px;width:16.2px;height:16.3px" ><use href="#i_clock"/></svg><div class="tt" style="left:1186.0px">Events</div>
<div class="tab" style="left:1242px;width:107.6px"></div><svg class="ic" style="left:1256.6px;top:95.6px;width:15.8px;height:10.7px" ><use href="#i_trig"/></svg><div class="tt" style="left:1283.9px">Triggers</div>
<div class="tab" style="left:1349.8px;width:81.4px"></div><div class="tri" style="left:1365.7px;top:98px"></div><div class="tt" style="left:1387.9px">More</div>
<div class="mt" style="left:329.4px;top:135.4px">Page number:</div><div class="sel" style="left:429.3px;top:131.2px;width:41.4px;height:27.6px"><span>1</span><em><i></i></em></div><div class="mt lk" style="left:481.3px;top:137.1px">&gt; &gt;&gt;</div>
<div id="fs"></div><div id="lg">Filters</div><div class="mt" style="left:346.8px;top:220.4px">Containing the word:</div><div id="finp"></div>
<div class="th" style="left:329.8px;width:34.7px"></div><div class="th" style="left:366px;width:263.4px"></div><div class="th" style="left:631px;width:463.3px"></div><div class="th" style="left:1095.9px;width:45.8px"></div><div class="th" style="left:1143px;width:57.8px"></div><div class="th" style="left:1202.2px;width:144.5px"></div><div class="th" style="left:1348px;width:39.5px"></div><div class="th" style="left:1389px;width:71.0px"></div><div class="tht lk" style="left:370.3px">Table</div><div class="sortup"></div><div class="tht" style="left:635.8px;color:#000">Action</div><div class="tht lk" style="left:1099.8px;top:251.9px">Rows</div><svg class="ic" style="left:1105.5px;top:272.3px;width:14.8px;height:14.6px" ><use href="#i_help"/></svg><div class="tht lk" style="left:1147.2px">Type</div><div class="tht lk" style="left:1205.7px">Collation</div><div class="tht lk" style="left:1351.7px">Size</div><div class="tht lk" style="left:1393.1px">Overhead</div>
<div class="cb" style="top:297.20px"></div><div class="r b lk" style="left:368.8px;top:292.80px">mo_analytics_indicator_calc</div><svg class="ic" style="left:635px;top:294.9px;width:17.1px;height:18.2px" ><use href="#i_star"/></svg><svg class="ic" style="left:666.1px;top:296.2px;width:14.6px;height:15.4px" ><use href="#i_browse"/></svg><div class="r lk" style="left:685.8px;top:292.80px">Browse</div><svg class="ic" style="left:742.2px;top:296.2px;width:17px;height:15.4px" ><use href="#i_struct"/></svg><div class="r lk" style="left:762.5px;top:292.80px">Structure</div><svg class="ic" style="left:830.2px;top:296.8px;width:14px;height:13.7px" ><use href="#i_search_g"/></svg><div class="r lk" style="left:850.1px;top:292.80px">Search</div><svg class="ic" style="left:904.7px;top:296.2px;width:15.2px;height:16.4px" ><use href="#i_insert"/></svg><div class="r lk" style="left:924.2px;top:292.80px">Insert</div><svg class="ic" style="left:969.1px;top:295.2px;width:17.1px;height:17.4px" ><use href="#i_empty"/></svg><div class="r lk" style="left:989.4px;top:292.80px">Empty</div><svg class="ic" style="left:1040.2px;top:296.2px;width:14.9px;height:15.4px" ><use href="#i_drop"/></svg><div class="r lk" style="left:1059.5px;top:292.80px">Drop</div><div class="r rn" style="right:371.4px;top:296.00px">0</div><div class="r" style="left:1146.4px;top:292.80px">InnoDB</div><div class="r" style="left:1205.2px;top:292.80px">utf8mb4_unicode_ci</div><div class="r mono lk sz" style="right:124.7px;top:291.50px">24.0<br>KiB</div>
<div class="rowbg" style="top:318.70px"></div><div class="cb" style="top:327.10px"></div><div class="r b lk" style="left:368.8px;top:322.70px">mo_analytics_models</div><svg class="ic" style="left:635px;top:324.8px;width:17.1px;height:18.2px" ><use href="#i_star"/></svg><svg class="ic" style="left:666.1px;top:326.1px;width:14.6px;height:15.4px" ><use href="#i_browse_c"/></svg><div class="r lk" style="left:685.8px;top:322.70px">Browse</div><svg class="ic" style="left:742.2px;top:326.1px;width:17px;height:15.4px" ><use href="#i_struct"/></svg><div class="r lk" style="left:762.5px;top:322.70px">Structure</div><svg class="ic" style="left:830.2px;top:326.7px;width:14px;height:13.7px" ><use href="#i_search_c"/></svg><div class="r lk" style="left:850.1px;top:322.70px">Search</div><svg class="ic" style="left:904.7px;top:326.1px;width:15.2px;height:16.4px" ><use href="#i_insert"/></svg><div class="r lk" style="left:924.2px;top:322.70px">Insert</div><svg class="ic" style="left:969.1px;top:325.1px;width:17.1px;height:17.4px" ><use href="#i_empty_c"/></svg><div class="r lk" style="left:989.4px;top:322.70px">Empty</div><svg class="ic" style="left:1040.2px;top:326.1px;width:14.9px;height:15.4px" ><use href="#i_drop"/></svg><div class="r lk" style="left:1059.5px;top:322.70px">Drop</div><div class="r rn" style="right:371.4px;top:325.90px">5</div><div class="r" style="left:1146.4px;top:322.70px">InnoDB</div><div class="r" style="left:1205.2px;top:322.70px">utf8mb4_unicode_ci</div><div class="r mono lk sz" style="right:124.7px;top:321.40px">16.0<br>KiB</div>
<div class="cb" style="top:357.00px"></div><div class="r b lk" style="left:368.8px;top:352.60px">mo_analytics_models_log</div><svg class="ic" style="left:635px;top:354.7px;width:17.1px;height:18.2px" ><use href="#i_star"/></svg><svg class="ic" style="left:666.1px;top:356.0px;width:14.6px;height:15.4px" ><use href="#i_browse"/></svg><div class="r lk" style="left:685.8px;top:352.60px">Browse</div><svg class="ic" style="left:742.2px;top:356.0px;width:17px;height:15.4px" ><use href="#i_struct"/></svg><div class="r lk" style="left:762.5px;top:352.60px">Structure</div><svg class="ic" style="left:830.2px;top:356.6px;width:14px;height:13.7px" ><use href="#i_search_g"/></svg><div class="r lk" style="left:850.1px;top:352.60px">Search</div><svg class="ic" style="left:904.7px;top:356.0px;width:15.2px;height:16.4px" ><use href="#i_insert"/></svg><div class="r lk" style="left:924.2px;top:352.60px">Insert</div><svg class="ic" style="left:969.1px;top:355.0px;width:17.1px;height:17.4px" ><use href="#i_empty"/></svg><div class="r lk" style="left:989.4px;top:352.60px">Empty</div><svg class="ic" style="left:1040.2px;top:356.0px;width:14.9px;height:15.4px" ><use href="#i_drop"/></svg><div class="r lk" style="left:1059.5px;top:352.60px">Drop</div><div class="r rn" style="right:371.4px;top:355.80px">0</div><div class="r" style="left:1146.4px;top:352.60px">InnoDB</div><div class="r" style="left:1205.2px;top:352.60px">utf8mb4_unicode_ci</div><div class="r mono lk sz" style="right:124.7px;top:351.30px">16.0<br>KiB</div>
<div class="rowbg" style="top:378.50px"></div><div class="cb" style="top:386.90px"></div><div class="r b lk" style="left:368.8px;top:382.50px">mo_analytics_predictions</div><svg class="ic" style="left:635px;top:384.6px;width:17.1px;height:18.2px" ><use href="#i_star"/></svg><svg class="ic" style="left:666.1px;top:385.9px;width:14.6px;height:15.4px" ><use href="#i_browse"/></svg><div class="r lk" style="left:685.8px;top:382.50px">Browse</div><svg class="ic" style="left:742.2px;top:385.9px;width:17px;height:15.4px" ><use href="#i_struct"/></svg><div class="r lk" style="left:762.5px;top:382.50px">Structure</div><svg class="ic" style="left:830.2px;top:386.5px;width:14px;height:13.7px" ><use href="#i_search_g"/></svg><div class="r lk" style="left:850.1px;top:382.50px">Search</div><svg class="ic" style="left:904.7px;top:385.9px;width:15.2px;height:16.4px" ><use href="#i_insert"/></svg><div class="r lk" style="left:924.2px;top:382.50px">Insert</div><svg class="ic" style="left:969.1px;top:384.9px;width:17.1px;height:17.4px" ><use href="#i_empty"/></svg><div class="r lk" style="left:989.4px;top:382.50px">Empty</div><svg class="ic" style="left:1040.2px;top:385.9px;width:14.9px;height:15.4px" ><use href="#i_drop"/></svg><div class="r lk" style="left:1059.5px;top:382.50px">Drop</div><div class="r rn" style="right:371.4px;top:385.70px">0</div><div class="r" style="left:1146.4px;top:382.50px">InnoDB</div><div class="r" style="left:1205.2px;top:382.50px">utf8mb4_unicode_ci</div><div class="r mono lk sz" style="right:124.7px;top:381.20px">32.0<br>KiB</div>
<div class="cb" style="top:416.80px"></div><div class="r b lk" style="left:368.8px;top:412.40px">mo_analytics_prediction_actions</div><svg class="ic" style="left:635px;top:414.5px;width:17.1px;height:18.2px" ><use href="#i_star"/></svg><svg class="ic" style="left:666.1px;top:415.8px;width:14.6px;height:15.4px" ><use href="#i_browse"/></svg><div class="r lk" style="left:685.8px;top:412.40px">Browse</div><svg class="ic" style="left:742.2px;top:415.8px;width:17px;height:15.4px" ><use href="#i_struct"/></svg><div class="r lk" style="left:762.5px;top:412.40px">Structure</div><svg class="ic" style="left:830.2px;top:416.4px;width:14px;height:13.7px" ><use href="#i_search_g"/></svg><div class="r lk" style="left:850.1px;top:412.40px">Search</div><svg class="ic" style="left:904.7px;top:415.8px;width:15.2px;height:16.4px" ><use href="#i_insert"/></svg><div class="r lk" style="left:924.2px;top:412.40px">Insert</div><svg class="ic" style="left:969.1px;top:414.8px;width:17.1px;height:17.4px" ><use href="#i_empty"/></svg><div class="r lk" style="left:989.4px;top:412.40px">Empty</div><svg class="ic" style="left:1040.2px;top:415.8px;width:14.9px;height:15.4px" ><use href="#i_drop"/></svg><div class="r lk" style="left:1059.5px;top:412.40px">Drop</div><div class="r rn" style="right:371.4px;top:415.60px">0</div><div class="r" style="left:1146.4px;top:412.40px">InnoDB</div><div class="r" style="left:1205.2px;top:412.40px">utf8mb4_unicode_ci</div><div class="r mono lk sz" style="right:124.7px;top:411.10px">32.0<br>KiB</div>
<div class="rowbg" style="top:438.30px"></div><div class="cb" style="top:446.70px"></div><div class="r b lk" style="left:368.8px;top:442.30px">mo_analytics_predict_samples</div><svg class="ic" style="left:635px;top:444.4px;width:17.1px;height:18.2px" ><use href="#i_star"/></svg><svg class="ic" style="left:666.1px;top:445.7px;width:14.6px;height:15.4px" ><use href="#i_browse"/></svg><div class="r lk" style="left:685.8px;top:442.30px">Browse</div><svg class="ic" style="left:742.2px;top:445.7px;width:17px;height:15.4px" ><use href="#i_struct"/></svg><div class="r lk" style="left:762.5px;top:442.30px">Structure</div><svg class="ic" style="left:830.2px;top:446.3px;width:14px;height:13.7px" ><use href="#i_search_g"/></svg><div class="r lk" style="left:850.1px;top:442.30px">Search</div><svg class="ic" style="left:904.7px;top:445.7px;width:15.2px;height:16.4px" ><use href="#i_insert"/></svg><div class="r lk" style="left:924.2px;top:442.30px">Insert</div><svg class="ic" style="left:969.1px;top:444.7px;width:17.1px;height:17.4px" ><use href="#i_empty"/></svg><div class="r lk" style="left:989.4px;top:442.30px">Empty</div><svg class="ic" style="left:1040.2px;top:445.7px;width:14.9px;height:15.4px" ><use href="#i_drop"/></svg><div class="r lk" style="left:1059.5px;top:442.30px">Drop</div><div class="r rn" style="right:371.4px;top:445.50px">0</div><div class="r" style="left:1146.4px;top:442.30px">InnoDB</div><div class="r" style="left:1205.2px;top:442.30px">utf8mb4_unicode_ci</div><div class="r mono lk sz" style="right:124.7px;top:441.00px">24.0<br>KiB</div>
<div class="cb" style="top:476.60px"></div><div class="r b lk" style="left:368.8px;top:472.20px">mo_analytics_train_samples</div><svg class="ic" style="left:635px;top:474.3px;width:17.1px;height:18.2px" ><use href="#i_star"/></svg><svg class="ic" style="left:666.1px;top:475.6px;width:14.6px;height:15.4px" ><use href="#i_browse"/></svg><div class="r lk" style="left:685.8px;top:472.20px">Browse</div><svg class="ic" style="left:742.2px;top:475.6px;width:17px;height:15.4px" ><use href="#i_struct"/></svg><div class="r lk" style="left:762.5px;top:472.20px">Structure</div><svg class="ic" style="left:830.2px;top:476.2px;width:14px;height:13.7px" ><use href="#i_search_g"/></svg><div class="r lk" style="left:850.1px;top:472.20px">Search</div><svg class="ic" style="left:904.7px;top:475.6px;width:15.2px;height:16.4px" ><use href="#i_insert"/></svg><div class="r lk" style="left:924.2px;top:472.20px">Insert</div><svg class="ic" style="left:969.1px;top:474.6px;width:17.1px;height:17.4px" ><use href="#i_empty"/></svg><div class="r lk" style="left:989.4px;top:472.20px">Empty</div><svg class="ic" style="left:1040.2px;top:475.6px;width:14.9px;height:15.4px" ><use href="#i_drop"/></svg><div class="r lk" style="left:1059.5px;top:472.20px">Drop</div><div class="r rn" style="right:371.4px;top:475.40px">0</div><div class="r" style="left:1146.4px;top:472.20px">InnoDB</div><div class="r" style="left:1205.2px;top:472.20px">utf8mb4_unicode_ci</div><div class="r mono lk sz" style="right:124.7px;top:470.90px">24.0<br>KiB</div>
<div class="rowbg" style="top:498.10px"></div><div class="cb" style="top:506.50px"></div><div class="r b lk" style="left:368.8px;top:502.10px">mo_analytics_used_analysables</div><svg class="ic" style="left:635px;top:504.2px;width:17.1px;height:18.2px" ><use href="#i_star"/></svg><svg class="ic" style="left:666.1px;top:505.5px;width:14.6px;height:15.4px" ><use href="#i_browse"/></svg><div class="r lk" style="left:685.8px;top:502.10px">Browse</div><svg class="ic" style="left:742.2px;top:505.5px;width:17px;height:15.4px" ><use href="#i_struct"/></svg><div class="r lk" style="left:762.5px;top:502.10px">Structure</div><svg class="ic" style="left:830.2px;top:506.1px;width:14px;height:13.7px" ><use href="#i_search_g"/></svg><div class="r lk" style="left:850.1px;top:502.10px">Search</div><svg class="ic" style="left:904.7px;top:505.5px;width:15.2px;height:16.4px" ><use href="#i_insert"/></svg><div class="r lk" style="left:924.2px;top:502.10px">Insert</div><svg class="ic" style="left:969.1px;top:504.5px;width:17.1px;height:17.4px" ><use href="#i_empty"/></svg><div class="r lk" style="left:989.4px;top:502.10px">Empty</div><svg class="ic" style="left:1040.2px;top:505.5px;width:14.9px;height:15.4px" ><use href="#i_drop"/></svg><div class="r lk" style="left:1059.5px;top:502.10px">Drop</div><div class="r rn" style="right:371.4px;top:505.30px">0</div><div class="r" style="left:1146.4px;top:502.10px">InnoDB</div><div class="r" style="left:1205.2px;top:502.10px">utf8mb4_unicode_ci</div><div class="r mono lk sz" style="right:124.7px;top:500.80px">32.0<br>KiB</div>
<div class="cb" style="top:536.40px"></div><div class="r b lk" style="left:368.8px;top:532.00px">mo_analytics_used_files</div><svg class="ic" style="left:635px;top:534.1px;width:17.1px;height:18.2px" ><use href="#i_star"/></svg><svg class="ic" style="left:666.1px;top:535.4px;width:14.6px;height:15.4px" ><use href="#i_browse"/></svg><div class="r lk" style="left:685.8px;top:532.00px">Browse</div><svg class="ic" style="left:742.2px;top:535.4px;width:17px;height:15.4px" ><use href="#i_struct"/></svg><div class="r lk" style="left:762.5px;top:532.00px">Structure</div><svg class="ic" style="left:830.2px;top:536.0px;width:14px;height:13.7px" ><use href="#i_search_g"/></svg><div class="r lk" style="left:850.1px;top:532.00px">Search</div><svg class="ic" style="left:904.7px;top:535.4px;width:15.2px;height:16.4px" ><use href="#i_insert"/></svg><div class="r lk" style="left:924.2px;top:532.00px">Insert</div><svg class="ic" style="left:969.1px;top:534.4px;width:17.1px;height:17.4px" ><use href="#i_empty"/></svg><div class="r lk" style="left:989.4px;top:532.00px">Empty</div><svg class="ic" style="left:1040.2px;top:535.4px;width:14.9px;height:15.4px" ><use href="#i_drop"/></svg><div class="r lk" style="left:1059.5px;top:532.00px">Drop</div><div class="r rn" style="right:371.4px;top:535.20px">0</div><div class="r" style="left:1146.4px;top:532.00px">InnoDB</div><div class="r" style="left:1205.2px;top:532.00px">utf8mb4_unicode_ci</div><div class="r mono lk sz" style="right:124.7px;top:530.70px">32.0<br>KiB</div>
<div class="rowbg" style="top:557.90px"></div><div class="cb" style="top:566.30px"></div><div class="r b lk" style="left:368.8px;top:561.90px">mo_assign</div><svg class="ic" style="left:635px;top:564.0px;width:17.1px;height:18.2px" ><use href="#i_star"/></svg><svg class="ic" style="left:666.1px;top:565.3px;width:14.6px;height:15.4px" ><use href="#i_browse"/></svg><div class="r lk" style="left:685.8px;top:561.90px">Browse</div><svg class="ic" style="left:742.2px;top:565.3px;width:17px;height:15.4px" ><use href="#i_struct"/></svg><div class="r lk" style="left:762.5px;top:561.90px">Structure</div><svg class="ic" style="left:830.2px;top:565.9px;width:14px;height:13.7px" ><use href="#i_search_g"/></svg><div class="r lk" style="left:850.1px;top:561.90px">Search</div><svg class="ic" style="left:904.7px;top:565.3px;width:15.2px;height:16.4px" ><use href="#i_insert"/></svg><div class="r lk" style="left:924.2px;top:561.90px">Insert</div><svg class="ic" style="left:969.1px;top:564.3px;width:17.1px;height:17.4px" ><use href="#i_empty"/></svg><div class="r lk" style="left:989.4px;top:561.90px">Empty</div><svg class="ic" style="left:1040.2px;top:565.3px;width:14.9px;height:15.4px" ><use href="#i_drop"/></svg><div class="r lk" style="left:1059.5px;top:561.90px">Drop</div><div class="r rn" style="right:371.4px;top:565.10px">0</div><div class="r" style="left:1146.4px;top:561.90px">InnoDB</div><div class="r" style="left:1205.2px;top:561.90px">utf8mb4_unicode_ci</div><div class="r mono lk sz" style="right:124.7px;top:560.60px">24.0<br>KiB</div>
<div class="cb" style="top:596.20px"></div><div class="r b lk" style="left:368.8px;top:591.80px">mo_assignfeedback_comments</div><svg class="ic" style="left:635px;top:593.9px;width:17.1px;height:18.2px" ><use href="#i_star"/></svg><svg class="ic" style="left:666.1px;top:595.2px;width:14.6px;height:15.4px" ><use href="#i_browse"/></svg><div class="r lk" style="left:685.8px;top:591.80px">Browse</div><svg class="ic" style="left:742.2px;top:595.2px;width:17px;height:15.4px" ><use href="#i_struct"/></svg><div class="r lk" style="left:762.5px;top:591.80px">Structure</div><svg class="ic" style="left:830.2px;top:595.8px;width:14px;height:13.7px" ><use href="#i_search_g"/></svg><div class="r lk" style="left:850.1px;top:591.80px">Search</div><svg class="ic" style="left:904.7px;top:595.2px;width:15.2px;height:16.4px" ><use href="#i_insert"/></svg><div class="r lk" style="left:924.2px;top:591.80px">Insert</div><svg class="ic" style="left:969.1px;top:594.2px;width:17.1px;height:17.4px" ><use href="#i_empty"/></svg><div class="r lk" style="left:989.4px;top:591.80px">Empty</div><svg class="ic" style="left:1040.2px;top:595.2px;width:14.9px;height:15.4px" ><use href="#i_drop"/></svg><div class="r lk" style="left:1059.5px;top:591.80px">Drop</div><div class="r rn" style="right:371.4px;top:595.00px">0</div><div class="r" style="left:1146.4px;top:591.80px">InnoDB</div><div class="r" style="left:1205.2px;top:591.80px">utf8mb4_unicode_ci</div><div class="r mono lk sz" style="right:124.7px;top:590.50px">24.0<br>KiB</div>
<div class="rowbg" style="top:617.70px"></div><div class="cb" style="top:626.10px"></div><div class="r b lk" style="left:368.8px;top:621.70px">mo_assignfeedback_editpdf_annot</div><svg class="ic" style="left:635px;top:623.8px;width:17.1px;height:18.2px" ><use href="#i_star"/></svg><svg class="ic" style="left:666.1px;top:625.1px;width:14.6px;height:15.4px" ><use href="#i_browse"/></svg><div class="r lk" style="left:685.8px;top:621.70px">Browse</div><svg class="ic" style="left:742.2px;top:625.1px;width:17px;height:15.4px" ><use href="#i_struct"/></svg><div class="r lk" style="left:762.5px;top:621.70px">Structure</div><svg class="ic" style="left:830.2px;top:625.7px;width:14px;height:13.7px" ><use href="#i_search_g"/></svg><div class="r lk" style="left:850.1px;top:621.70px">Search</div><svg class="ic" style="left:904.7px;top:625.1px;width:15.2px;height:16.4px" ><use href="#i_insert"/></svg><div class="r lk" style="left:924.2px;top:621.70px">Insert</div><svg class="ic" style="left:969.1px;top:624.1px;width:17.1px;height:17.4px" ><use href="#i_empty"/></svg><div class="r lk" style="left:989.4px;top:621.70px">Empty</div><svg class="ic" style="left:1040.2px;top:625.1px;width:14.9px;height:15.4px" ><use href="#i_drop"/></svg><div class="r lk" style="left:1059.5px;top:621.70px">Drop</div><div class="r rn" style="right:371.4px;top:624.90px">0</div><div class="r" style="left:1146.4px;top:621.70px">InnoDB</div><div class="r" style="left:1205.2px;top:621.70px">utf8mb4_unicode_ci</div><div class="r mono lk sz" style="right:124.7px;top:620.40px">24.0<br>KiB</div>
<div class="cb" style="top:656.00px"></div><div class="r b lk" style="left:368.8px;top:651.60px">mo_assignfeedback_editpdf_cmnt</div><svg class="ic" style="left:635px;top:653.7px;width:17.1px;height:18.2px" ><use href="#i_star"/></svg><svg class="ic" style="left:666.1px;top:655.0px;width:14.6px;height:15.4px" ><use href="#i_browse"/></svg><div class="r lk" style="left:685.8px;top:651.60px">Browse</div><svg class="ic" style="left:742.2px;top:655.0px;width:17px;height:15.4px" ><use href="#i_struct"/></svg><div class="r lk" style="left:762.5px;top:651.60px">Structure</div><svg class="ic" style="left:830.2px;top:655.6px;width:14px;height:13.7px" ><use href="#i_search_g"/></svg><div class="r lk" style="left:850.1px;top:651.60px">Search</div><svg class="ic" style="left:904.7px;top:655.0px;width:15.2px;height:16.4px" ><use href="#i_insert"/></svg><div class="r lk" style="left:924.2px;top:651.60px">Insert</div><svg class="ic" style="left:969.1px;top:654.0px;width:17.1px;height:17.4px" ><use href="#i_empty"/></svg><div class="r lk" style="left:989.4px;top:651.60px">Empty</div><svg class="ic" style="left:1040.2px;top:655.0px;width:14.9px;height:15.4px" ><use href="#i_drop"/></svg><div class="r lk" style="left:1059.5px;top:651.60px">Drop</div><div class="r rn" style="right:371.4px;top:654.80px">0</div><div class="r" style="left:1146.4px;top:651.60px">InnoDB</div><div class="r" style="left:1205.2px;top:651.60px">utf8mb4_unicode_ci</div><div class="r mono lk sz" style="right:124.7px;top:650.30px">24.0<br>KiB</div>
<div class="rowbg" style="top:677.50px"></div><div class="cb" style="top:685.90px"></div><div class="r b lk" style="left:368.8px;top:681.50px">mo_assignfeedback_editpdf_queue</div><svg class="ic" style="left:635px;top:683.6px;width:17.1px;height:18.2px" ><use href="#i_star"/></svg><svg class="ic" style="left:666.1px;top:684.9px;width:14.6px;height:15.4px" ><use href="#i_browse"/></svg><div class="r lk" style="left:685.8px;top:681.50px">Browse</div><svg class="ic" style="left:742.2px;top:684.9px;width:17px;height:15.4px" ><use href="#i_struct"/></svg><div class="r lk" style="left:762.5px;top:681.50px">Structure</div><svg class="ic" style="left:830.2px;top:685.5px;width:14px;height:13.7px" ><use href="#i_search_g"/></svg><div class="r lk" style="left:850.1px;top:681.50px">Search</div><svg class="ic" style="left:904.7px;top:684.9px;width:15.2px;height:16.4px" ><use href="#i_insert"/></svg><div class="r lk" style="left:924.2px;top:681.50px">Insert</div><svg class="ic" style="left:969.1px;top:683.9px;width:17.1px;height:17.4px" ><use href="#i_empty"/></svg><div class="r lk" style="left:989.4px;top:681.50px">Empty</div><svg class="ic" style="left:1040.2px;top:684.9px;width:14.9px;height:15.4px" ><use href="#i_drop"/></svg><div class="r lk" style="left:1059.5px;top:681.50px">Drop</div><div class="r rn" style="right:371.4px;top:684.70px">0</div><div class="r" style="left:1146.4px;top:681.50px">InnoDB</div><div class="r" style="left:1205.2px;top:681.50px">utf8mb4_unicode_ci</div><div class="r mono lk sz" style="right:124.7px;top:680.20px">16.0<br>KiB</div>
<div class="cb" style="top:715.80px"></div><div class="r b lk" style="left:368.8px;top:711.40px">mo_assignfeedback_editpdf_quick</div><svg class="ic" style="left:635px;top:713.5px;width:17.1px;height:18.2px" ><use href="#i_star"/></svg><svg class="ic" style="left:666.1px;top:714.8px;width:14.6px;height:15.4px" ><use href="#i_browse"/></svg><div class="r lk" style="left:685.8px;top:711.40px">Browse</div><svg class="ic" style="left:742.2px;top:714.8px;width:17px;height:15.4px" ><use href="#i_struct"/></svg><div class="r lk" style="left:762.5px;top:711.40px">Structure</div><svg class="ic" style="left:830.2px;top:715.4px;width:14px;height:13.7px" ><use href="#i_search_g"/></svg><div class="r lk" style="left:850.1px;top:711.40px">Search</div><svg class="ic" style="left:904.7px;top:714.8px;width:15.2px;height:16.4px" ><use href="#i_insert"/></svg><div class="r lk" style="left:924.2px;top:711.40px">Insert</div><svg class="ic" style="left:969.1px;top:713.8px;width:17.1px;height:17.4px" ><use href="#i_empty"/></svg><div class="r lk" style="left:989.4px;top:711.40px">Empty</div><svg class="ic" style="left:1040.2px;top:714.8px;width:14.9px;height:15.4px" ><use href="#i_drop"/></svg><div class="r lk" style="left:1059.5px;top:711.40px">Drop</div><div class="r rn" style="right:371.4px;top:714.60px">0</div><div class="r" style="left:1146.4px;top:711.40px">InnoDB</div><div class="r" style="left:1205.2px;top:711.40px">utf8mb4_unicode_ci</div><div class="r mono lk sz" style="right:124.7px;top:710.10px">16.0<br>KiB</div>
<div class="rowbg" style="top:737.30px"></div><div class="cb" style="top:745.70px"></div><div class="r b lk" style="left:368.8px;top:741.30px">mo_assignfeedback_editpdf_rot</div><svg class="ic" style="left:635px;top:743.4px;width:17.1px;height:18.2px" ><use href="#i_star"/></svg><svg class="ic" style="left:666.1px;top:744.7px;width:14.6px;height:15.4px" ><use href="#i_browse"/></svg><div class="r lk" style="left:685.8px;top:741.30px">Browse</div><svg class="ic" style="left:742.2px;top:744.7px;width:17px;height:15.4px" ><use href="#i_struct"/></svg><div class="r lk" style="left:762.5px;top:741.30px">Structure</div><svg class="ic" style="left:830.2px;top:745.3px;width:14px;height:13.7px" ><use href="#i_search_g"/></svg><div class="r lk" style="left:850.1px;top:741.30px">Search</div><svg class="ic" style="left:904.7px;top:744.7px;width:15.2px;height:16.4px" ><use href="#i_insert"/></svg><div class="r lk" style="left:924.2px;top:741.30px">Insert</div><svg class="ic" style="left:969.1px;top:743.7px;width:17.1px;height:17.4px" ><use href="#i_empty"/></svg><div class="r lk" style="left:989.4px;top:741.30px">Empty</div><svg class="ic" style="left:1040.2px;top:744.7px;width:14.9px;height:15.4px" ><use href="#i_drop"/></svg><div class="r lk" style="left:1059.5px;top:741.30px">Drop</div><div class="r rn" style="right:371.4px;top:744.50px">0</div><div class="r" style="left:1146.4px;top:741.30px">InnoDB</div><div class="r" style="left:1205.2px;top:741.30px">utf8mb4_unicode_ci</div><div class="r mono lk sz" style="right:124.7px;top:740.00px">24.0<br>KiB</div>
<div class="cb" style="top:775.60px"></div><div class="r b lk" style="left:368.8px;top:771.20px">mo_assignfeedback_file</div><svg class="ic" style="left:635px;top:773.3px;width:17.1px;height:18.2px" ><use href="#i_star"/></svg><svg class="ic" style="left:666.1px;top:774.6px;width:14.6px;height:15.4px" ><use href="#i_browse"/></svg><div class="r lk" style="left:685.8px;top:771.20px">Browse</div><svg class="ic" style="left:742.2px;top:774.6px;width:17px;height:15.4px" ><use href="#i_struct"/></svg><div class="r lk" style="left:762.5px;top:771.20px">Structure</div><svg class="ic" style="left:830.2px;top:775.2px;width:14px;height:13.7px" ><use href="#i_search_g"/></svg><div class="r lk" style="left:850.1px;top:771.20px">Search</div><svg class="ic" style="left:904.7px;top:774.6px;width:15.2px;height:16.4px" ><use href="#i_insert"/></svg><div class="r lk" style="left:924.2px;top:771.20px">Insert</div><svg class="ic" style="left:969.1px;top:773.6px;width:17.1px;height:17.4px" ><use href="#i_empty"/></svg><div class="r lk" style="left:989.4px;top:771.20px">Empty</div><svg class="ic" style="left:1040.2px;top:774.6px;width:14.9px;height:15.4px" ><use href="#i_drop"/></svg><div class="r lk" style="left:1059.5px;top:771.20px">Drop</div><div class="r rn" style="right:371.4px;top:774.40px">0</div><div class="r" style="left:1146.4px;top:771.20px">InnoDB</div><div class="r" style="left:1205.2px;top:771.20px">utf8mb4_unicode_ci</div><div class="r mono lk sz" style="right:124.7px;top:769.90px">24.0<br>KiB</div>
<div class="rowbg" style="top:797.10px"></div><div class="cb" style="top:805.50px"></div><div class="r b lk" style="left:368.8px;top:801.10px">mo_assignment</div><svg class="ic" style="left:635px;top:803.2px;width:17.1px;height:18.2px" ><use href="#i_star"/></svg><svg class="ic" style="left:666.1px;top:804.5px;width:14.6px;height:15.4px" ><use href="#i_browse"/></svg><div class="r lk" style="left:685.8px;top:801.10px">Browse</div><svg class="ic" style="left:742.2px;top:804.5px;width:17px;height:15.4px" ><use href="#i_struct"/></svg><div class="r lk" style="left:762.5px;top:801.10px">Structure</div><svg class="ic" style="left:830.2px;top:805.1px;width:14px;height:13.7px" ><use href="#i_search_g"/></svg><div class="r lk" style="left:850.1px;top:801.10px">Search</div><svg class="ic" style="left:904.7px;top:804.5px;width:15.2px;height:16.4px" ><use href="#i_insert"/></svg><div class="r lk" style="left:924.2px;top:801.10px">Insert</div><svg class="ic" style="left:969.1px;top:803.5px;width:17.1px;height:17.4px" ><use href="#i_empty"/></svg><div class="r lk" style="left:989.4px;top:801.10px">Empty</div><svg class="ic" style="left:1040.2px;top:804.5px;width:14.9px;height:15.4px" ><use href="#i_drop"/></svg><div class="r lk" style="left:1059.5px;top:801.10px">Drop</div><div class="r rn" style="right:371.4px;top:804.30px">0</div><div class="r" style="left:1146.4px;top:801.10px">InnoDB</div><div class="r" style="left:1205.2px;top:801.10px">utf8mb4_unicode_ci</div><div class="r mono lk sz" style="right:124.7px;top:799.80px">16.0<br>KiB</div>
<div class="cb" style="top:835.40px"></div><div class="r b lk" style="left:368.8px;top:831.00px">mo_assignment_submissions</div><svg class="ic" style="left:635px;top:833.1px;width:17.1px;height:18.2px" ><use href="#i_star"/></svg><svg class="ic" style="left:666.1px;top:834.4px;width:14.6px;height:15.4px" ><use href="#i_browse"/></svg><div class="r lk" style="left:685.8px;top:831.00px">Browse</div><svg class="ic" style="left:742.2px;top:834.4px;width:17px;height:15.4px" ><use href="#i_struct"/></svg><div class="r lk" style="left:762.5px;top:831.00px">Structure</div><svg class="ic" style="left:830.2px;top:835.0px;width:14px;height:13.7px" ><use href="#i_search_g"/></svg><div class="r lk" style="left:850.1px;top:831.00px">Search</div><svg class="ic" style="left:904.7px;top:834.4px;width:15.2px;height:16.4px" ><use href="#i_insert"/></svg><div class="r lk" style="left:924.2px;top:831.00px">Insert</div><svg class="ic" style="left:969.1px;top:833.4px;width:17.1px;height:17.4px" ><use href="#i_empty"/></svg><div class="r lk" style="left:989.4px;top:831.00px">Empty</div><svg class="ic" style="left:1040.2px;top:834.4px;width:14.9px;height:15.4px" ><use href="#i_drop"/></svg><div class="r lk" style="left:1059.5px;top:831.00px">Drop</div><div class="r rn" style="right:371.4px;top:834.20px">0</div><div class="r" style="left:1146.4px;top:831.00px">InnoDB</div><div class="r" style="left:1205.2px;top:831.00px">utf8mb4_unicode_ci</div><div class="r mono lk sz" style="right:124.7px;top:829.70px">40.0<br>KiB</div>
<div class="rowbg" style="top:856.90px"></div><div class="cb" style="top:865.30px"></div><div class="r b lk" style="left:368.8px;top:860.90px">mo_assignment_upgrade</div><svg class="ic" style="left:635px;top:863.0px;width:17.1px;height:18.2px" ><use href="#i_star"/></svg><svg class="ic" style="left:666.1px;top:864.3px;width:14.6px;height:15.4px" ><use href="#i_browse"/></svg><div class="r lk" style="left:685.8px;top:860.90px">Browse</div><svg class="ic" style="left:742.2px;top:864.3px;width:17px;height:15.4px" ><use href="#i_struct"/></svg><div class="r lk" style="left:762.5px;top:860.90px">Structure</div><svg class="ic" style="left:830.2px;top:864.9px;width:14px;height:13.7px" ><use href="#i_search_g"/></svg><div class="r lk" style="left:850.1px;top:860.90px">Search</div><svg class="ic" style="left:904.7px;top:864.3px;width:15.2px;height:16.4px" ><use href="#i_insert"/></svg><div class="r lk" style="left:924.2px;top:860.90px">Insert</div><svg class="ic" style="left:969.1px;top:863.3px;width:17.1px;height:17.4px" ><use href="#i_empty"/></svg><div class="r lk" style="left:989.4px;top:860.90px">Empty</div><svg class="ic" style="left:1040.2px;top:864.3px;width:14.9px;height:15.4px" ><use href="#i_drop"/></svg><div class="r lk" style="left:1059.5px;top:860.90px">Drop</div><div class="r rn" style="right:371.4px;top:864.10px">0</div><div class="r" style="left:1146.4px;top:860.90px">InnoDB</div><div class="r" style="left:1205.2px;top:860.90px">utf8mb4_unicode_ci</div><div class="r mono lk sz" style="right:124.7px;top:859.60px">24.0<br>KiB</div>
<div class="cb" style="top:895.20px"></div><div class="r b lk" style="left:368.8px;top:890.80px">mo_assignsubmission_file</div><svg class="ic" style="left:635px;top:892.9px;width:17.1px;height:18.2px" ><use href="#i_star"/></svg><svg class="ic" style="left:666.1px;top:894.2px;width:14.6px;height:15.4px" ><use href="#i_browse"/></svg><div class="r lk" style="left:685.8px;top:890.80px">Browse</div><svg class="ic" style="left:742.2px;top:894.2px;width:17px;height:15.4px" ><use href="#i_struct"/></svg><div class="r lk" style="left:762.5px;top:890.80px">Structure</div><svg class="ic" style="left:830.2px;top:894.8px;width:14px;height:13.7px" ><use href="#i_search_g"/></svg><div class="r lk" style="left:850.1px;top:890.80px">Search</div><svg class="ic" style="left:904.7px;top:894.2px;width:15.2px;height:16.4px" ><use href="#i_insert"/></svg><div class="r lk" style="left:924.2px;top:890.80px">Insert</div><svg class="ic" style="left:969.1px;top:893.2px;width:17.1px;height:17.4px" ><use href="#i_empty"/></svg><div class="r lk" style="left:989.4px;top:890.80px">Empty</div><svg class="ic" style="left:1040.2px;top:894.2px;width:14.9px;height:15.4px" ><use href="#i_drop"/></svg><div class="r lk" style="left:1059.5px;top:890.80px">Drop</div><div class="r rn" style="right:371.4px;top:894.00px">0</div><div class="r" style="left:1146.4px;top:890.80px">InnoDB</div><div class="r" style="left:1205.2px;top:890.80px">utf8mb4_unicode_ci</div><div class="r mono lk sz" style="right:124.7px;top:889.50px">24.0<br>KiB</div>
<div class="rowbg" style="top:916.70px"></div><div class="cb" style="top:925.10px"></div><div class="r b lk" style="left:368.8px;top:920.70px">mo_assignsubmission_onlinetext</div><svg class="ic" style="left:635px;top:922.8px;width:17.1px;height:18.2px" ><use href="#i_star"/></svg><svg class="ic" style="left:666.1px;top:924.1px;width:14.6px;height:15.4px" ><use href="#i_browse"/></svg><div class="r lk" style="left:685.8px;top:920.70px">Browse</div><svg class="ic" style="left:742.2px;top:924.1px;width:17px;height:15.4px" ><use href="#i_struct"/></svg><div class="r lk" style="left:762.5px;top:920.70px">Structure</div><svg class="ic" style="left:830.2px;top:924.7px;width:14px;height:13.7px" ><use href="#i_search_g"/></svg><div class="r lk" style="left:850.1px;top:920.70px">Search</div><svg class="ic" style="left:904.7px;top:924.1px;width:15.2px;height:16.4px" ><use href="#i_insert"/></svg><div class="r lk" style="left:924.2px;top:920.70px">Insert</div><svg class="ic" style="left:969.1px;top:923.1px;width:17.1px;height:17.4px" ><use href="#i_empty"/></svg><div class="r lk" style="left:989.4px;top:920.70px">Empty</div><svg class="ic" style="left:1040.2px;top:924.1px;width:14.9px;height:15.4px" ><use href="#i_drop"/></svg><div class="r lk" style="left:1059.5px;top:920.70px">Drop</div><div class="r rn" style="right:371.4px;top:923.90px">0</div><div class="r" style="left:1146.4px;top:920.70px">InnoDB</div><div class="r" style="left:1205.2px;top:920.70px">utf8mb4_unicode_ci</div><div class="r mono lk sz" style="right:124.7px;top:919.40px">24.0<br>KiB</div>
<div id="console"></div><div id="contxt">Console</div><svg class="ic" style="left:334.9px;top:906.9px;width:14.3px;height:13.9px" ><use href="#i_console"/></svg>
</div>
</body></html>
